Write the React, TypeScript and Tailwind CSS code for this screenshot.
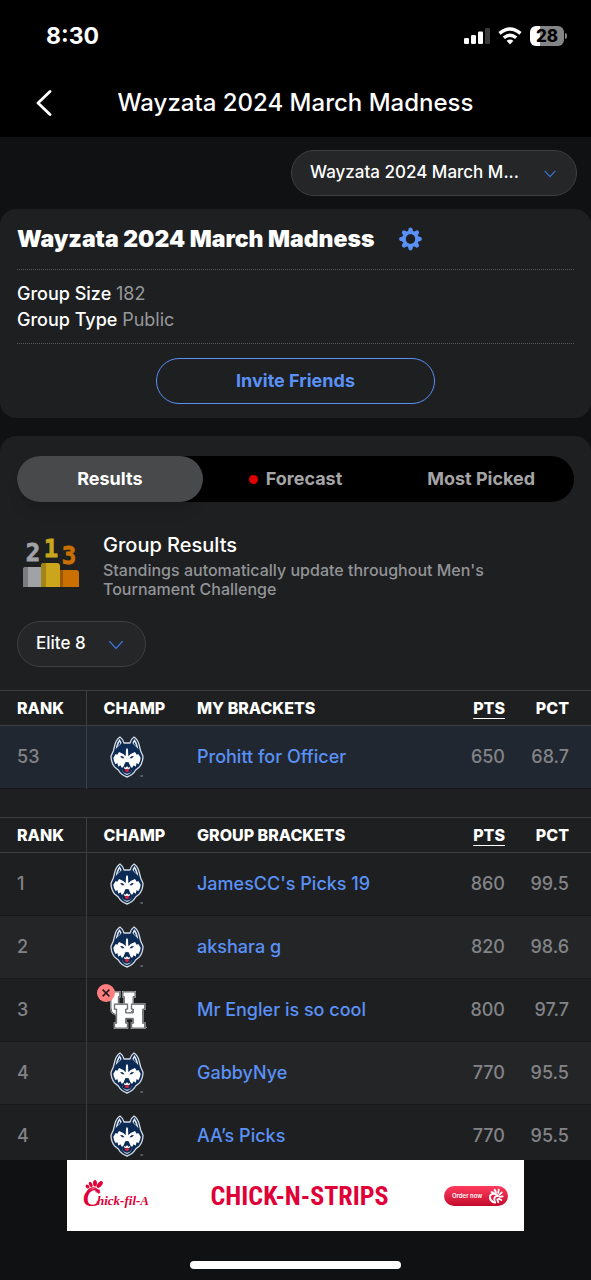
import React from "react";

type Champ = "huskies" | "cougars";
type Bracket = { rank: number; champ: Champ; out?: boolean; name: string; pts: number; pct: string };

const myBrackets: Bracket[] = [{ rank: 53, champ: "huskies", name: "Prohitt for Officer", pts: 650, pct: "68.7" }];

const groupBrackets: Bracket[] = [
  { rank: 1, champ: "huskies", name: "JamesCC's Picks 19", pts: 860, pct: "99.5" },
  { rank: 2, champ: "huskies", name: "akshara g", pts: 820, pct: "98.6" },
  { rank: 3, champ: "cougars", out: true, name: "Mr Engler is so cool", pts: 800, pct: "97.7" },
  { rank: 4, champ: "huskies", name: "GabbyNye", pts: 770, pct: "95.5" },
  { rank: 4, champ: "huskies", name: "AA’s Picks", pts: 770, pct: "95.5" },
];

function HuskyLogo() {
  return (
    <svg viewBox="0 0 102 124" className="h-[42px] w-[34px]" role="img" aria-label="UConn Huskies">
      <path
        d="M30 2 Q38 7 42 20 L60 20 Q64 7 72 2 Q82 8 87 24 L92 44 L99 60 Q99 78 89 91 L77 101 Q69 116 51 122 Q33 116 25 101 L13 91 Q3 78 3 60 L10 44 L15 24 Q20 8 30 2Z"
        fill="#0c2b54"
        stroke="#d3d8de"
        strokeWidth="4"
        strokeLinejoin="round"
      />
      <path d="M29 8 Q20 18 17 39 L22 33 Q31 25 35 20Z" fill="#e6eaef" />
      <path d="M73 8 Q82 18 85 39 L80 33 Q71 25 67 20Z" fill="#e6eaef" />
      <path d="M29 16 L22 31 L31 22Z M73 16 L80 31 L71 22Z" fill="#0c2b54" />
      <path
        d="M10 64 L17 53 L22 55 L27 47 L40 53 L47 60 L48 40 L51 34 L54 40 L55 60 L62 53 L75 47 L80 55 L85 53 L92 64 Q91 76 85 84 L80 80 L77 91 L71 87 L66 95 L61 90 L58 82 L44 82 L41 90 L36 95 L31 87 L25 91 L22 80 L17 84 Q11 76 10 64Z"
        fill="#fff"
      />
      <path d="M30 59 L38 60 L44 66 L36 66Z M72 59 L64 60 L58 66 L66 66Z" fill="#0c2b54" />
      <path d="M44 79 Q51 75 58 79 Q57 86 51 88 Q45 86 44 79Z" fill="#0c2b54" />
      <path d="M41 91 L46 94 L51 90 L56 94 L61 91 L59 97 L51 99 L43 97Z" fill="#fff" />
      <path d="M44 100 Q51 95 58 100 Q57 107 51 108 Q45 107 44 100Z" fill="#d8213f" />
      <path d="M35 99 Q38 111 51 116 Q64 111 67 99 L62 108 Q51 116 40 108Z" fill="#dfe4e9" />
      <path d="M91 119 H99" stroke="#8b929b" strokeWidth="3" />
    </svg>
  );
}

const U_SHAPE =
  "M14 20 H46 V34 H42 V66 Q42 74 51 74 Q60 74 60 66 V34 H56 V20 H92 V34 H86 V66 Q86 90 50 90 Q20 90 20 68 V34 H14Z";
const H_SHAPE =
  "M31 57 H69 V71 H64 V83 H87 V71 H82 V57 H121 V71 H115 V114 H121 V128 H82 V114 H87 V99 H64 V114 H69 V128 H31 V114 H37 V71 H31Z";

function CougarsLogo() {
  return (
    <svg viewBox="8 16 120 116" className="size-10" role="img" aria-label="Houston Cougars">
      {[U_SHAPE, H_SHAPE].map((d) => (
        <g key={d}>
          <path d={d} fill="#fff" stroke="#a9acaf" strokeWidth="6" />
          <path d={d} fill="#fff" stroke="#4c4f52" strokeWidth="2.5" />
        </g>
      ))}
      <path d="M124 126 H128" stroke="#9a9fa3" strokeWidth="3" />
    </svg>
  );
}

function Chevron({ className }: { className: string }) {
  return (
    <svg viewBox="0 0 14 9" className={className} fill="none" stroke="#3f74d8" strokeWidth="1.3" aria-hidden="true">
      <path d="M1 1 L7 7.6 L13 1" />
    </svg>
  );
}

function BracketTable({ title, rows, mine }: { title: string; rows: Bracket[]; mine?: boolean }) {
  return (
    <table className="w-full table-fixed border-collapse text-left">
      <colgroup>
        <col className="w-[86px]" />
        <col className="w-[111px]" />
        <col />
        <col className="w-14" />
        <col className="w-[86px]" />
      </colgroup>
      <thead>
        <tr className="h-[35px] border-y border-[#3d3e40] text-base text-white [&>th]:font-extrabold">
          <th scope="col" className="border-r border-[#3d3e40] pl-[17px]">RANK</th>
          <th scope="col" className="pl-[17px]">CHAMP</th>
          <th scope="col">{title}</th>
          <th scope="col" className="text-right underline underline-offset-4">PTS</th>
          <th scope="col" className="pr-[22px] text-right">PCT</th>
        </tr>
      </thead>
      <tbody>
        {rows.map((row, i) => (
          <tr
            key={row.name}
            className={
              "h-[63px] border-b border-[#19191b] text-lg font-medium text-[#828487] " +
              (mine ? "bg-[#212730]" : i % 2 ? "bg-[#242527]" : "bg-[#1e1f21]")
            }
          >
            <td className="border-r border-r-[#3d3e40] pl-[17px]">{row.rank}</td>
            <td className="pl-5">
              <div className="relative w-10">
                <div className="flex justify-center">{row.champ === "huskies" ? <HuskyLogo /> : <CougarsLogo />}</div>
                {row.out && (
                  <svg viewBox="0 0 18 18" className="absolute -top-1.5 -left-2.5 size-[18px]" role="img" aria-label="Eliminated">
                    <circle cx="9" cy="9" r="9" fill="#ff7f80" />
                    <path d="M5.6 5.6 L12.4 12.4 M12.4 5.6 L5.6 12.4" stroke="#26191a" strokeWidth="1.5" />
                  </svg>
                )}
              </div>
            </td>
            <td>
              <a href="#bracket" className="text-[#5a91f7]">{row.name}</a>
            </td>
            <td className="text-right">{row.pts}</td>
            <td className="pr-[22px] text-right">{row.pct}</td>
          </tr>
        ))}
      </tbody>
    </table>
  );
}

function StatusBar() {
  return (
    <div className="flex items-center justify-between pt-5 pr-6 pl-[46px]">
      <span className="text-[23px] leading-8 font-bold">8:30</span>
      <div className="flex items-center gap-2">
        <svg viewBox="0 0 26 16" className="h-4 w-[26px]" fill="#fff" aria-hidden="true">
          <rect x="0" y="10" width="5" height="6" rx="1.3" />
          <rect x="7" y="7" width="5" height="9" rx="1.3" />
          <rect x="14" y="3.5" width="5" height="12.5" rx="1.3" />
          <rect x="21" y="0" width="5" height="16" rx="1.3" fill="#3a3a3a" />
        </svg>
        <svg viewBox="0 0 24 18" className="h-[18px] w-6" fill="none" stroke="#fff" strokeWidth="3.4" aria-hidden="true">
          <path d="M1.5 6.4 Q12 -2.6 22.5 6.4" />
          <path d="M5.8 10.8 Q12 5.8 18.2 10.8" />
          <path d="M12 17.5 L8.6 13.8 Q12 11.4 15.4 13.8Z" fill="#fff" stroke="none" />
        </svg>
        <div className="flex items-center gap-px">
          <span className="flex h-5 w-[34px] items-center justify-center rounded-md bg-linear-to-r from-white from-28% to-[#858585] to-28% text-[17px] leading-5 font-extrabold text-black">
            28
          </span>
          <span className="h-1.5 w-0.5 rounded-r-full bg-[#858585]" />
        </div>
      </div>
    </div>
  );
}

function GearIcon() {
  return (
    <svg viewBox="0 0 24 24" className="h-6 w-[23px]" aria-hidden="true">
      <g fill="#5a91f7">
        {[0, 45, 90, 135, 180, 225, 270, 315].map((a) => (
          <path key={a} d="M8.6 6 L10.2 1 Q12 -0.8 13.8 1 L15.4 6Z" transform={`rotate(${a} 12 12)`} />
        ))}
      </g>
      <circle cx="12" cy="12" r="6.7" fill="none" stroke="#5a91f7" strokeWidth="3.8" />
      <circle cx="12" cy="12" r="4.9" fill="#1e1f21" />
    </svg>
  );
}

function PodiumIcon() {
  return (
    <svg viewBox="0 -8 56 56" className="size-14 shrink-0" aria-hidden="true">
      <g fontFamily="DejaVu Sans Mono, monospace" fontWeight="700" fontSize="24" textAnchor="middle" strokeWidth="0.8">
        <text x="10" y="21" fill="#a1a2a5" stroke="#a1a2a5">2</text>
        <text x="28" y="17" fill="#cba51c" stroke="#cba51c">1</text>
        <text x="46" y="24" fill="#c97000" stroke="#c97000">3</text>
      </g>
      <path d="M0 30 Q0 27 3 27 H20 V47 H0Z" fill="#a1a2a5" />
      <path d="M0 30 Q0 27 3 27 H5 V47 H0Z" fill="#7b7c7e" />
      <path d="M36 30 H53 Q56 30 56 33 V47 H36Z" fill="#c97000" />
      <path d="M36 30 H40 V47 H36Z" fill="#9c5705" />
      <path d="M18 26 Q18 23 21 23 H34 Q37 23 37 26 V47 H18Z" fill="#cba51c" />
      <path d="M18 26 Q18 23 21 23 H23 V47 H18Z" fill="#a28416" />
    </svg>
  );
}

function AdBanner() {
  return (
    <a href="#order" className="mx-auto flex h-[71px] w-[457px] max-w-full items-center justify-between bg-white px-4 text-[#e00037]">
      <svg viewBox="0 -2 72 36" className="h-9 w-[72px]" role="img" aria-label="Chick-fil-A">
        <g fill="#e00037">
          <ellipse cx="4.5" cy="6.5" rx="1.6" ry="2.2" transform="rotate(-45 4.5 6.5)" />
          <ellipse cx="7.7" cy="4.5" rx="1.6" ry="2.8" transform="rotate(-28 7.7 4.5)" />
          <ellipse cx="12" cy="3.2" rx="1.9" ry="3.2" />
          <ellipse cx="16.7" cy="4.5" rx="2.1" ry="4" transform="rotate(42 16.7 4.5)" />
        </g>
        <path d="M4 12 Q7 7 12 8 Q15 9 12.5 11.5 M14 10 L16 12 L13.5 12" fill="none" stroke="#e00037" strokeWidth="1.3" />
        <g fill="#e00037" fontFamily="Liberation Serif, serif" fontStyle="italic" fontWeight="700">
          <text x="0" y="26" fontSize="25">C</text>
          <text x="14" y="25" fontSize="13">hick-fil-A</text>
        </g>
      </svg>
      <span className="font-['Liberation_Sans_Narrow','Roboto_Condensed','Liberation_Sans',sans-serif] text-[26px] leading-8 font-bold">
        CHICK-N-STRIPS
      </span>
      <span className="flex h-5 w-16 items-center justify-between rounded-full bg-linear-to-b from-[#ff3a5e] to-[#c4062c] pr-1 pl-2 text-[6px] leading-5 font-semibold whitespace-nowrap text-white">
        Order now
        <svg viewBox="0 0 18 18" className="size-4" fill="none" stroke="#fff" strokeWidth="2.1" strokeLinecap="round" aria-hidden="true">
          <path d="M6 16 Q1 13 2.5 8.5 Q4.5 5.5 9 7 L11.5 9 L8.5 9.5 Q6 11 8 16.5" />
          <path d="M4 4.5 L6.5 5.5 M7.5 2 L9 5 M12 2 L11.5 5.5 M15.5 5 L13 7.5 M16.5 9.5 L13.5 10 M15 13.5 L12 12 M11.5 16 L10.5 13" />
        </svg>
      </span>
    </a>
  );
}

export default function App() {
  return (
    <div className="flex h-screen flex-col overflow-hidden bg-[#101113] font-['Inter','Liberation_Sans',sans-serif] text-white">
      <header className="h-[137px] shrink-0 bg-black">
        <StatusBar />
        <div className="grid grid-cols-[1fr_auto_1fr] items-center px-9 pt-[33px]">
          <button type="button" aria-label="Back" className="flex h-9 w-5 items-center">
            <svg viewBox="0 0 16 26" className="h-[26px] w-4" fill="none" stroke="#fff" strokeWidth="2.8" strokeLinecap="round" strokeLinejoin="round" aria-hidden="true">
              <path d="M14 1.5 L2 13 L14 24.5" />
            </svg>
          </button>
          <h1 className="text-2xl leading-9 font-medium">Wayzata 2024 March Madness</h1>
        </div>
      </header>

      <main className="min-h-0 flex-1 overflow-y-auto [scrollbar-width:none]">
        <div className="flex justify-end px-3.5 py-[13px]">
          <div className="relative w-[286px]">
            <select aria-label="Group" className="h-[46px] w-full appearance-none rounded-full border border-[#3d3f41] bg-[#242628] pl-[18px] text-[17px] font-medium text-white">
              <option>Wayzata 2024 March M...</option>
            </select>
            <Chevron className="pointer-events-none absolute top-5 right-5 h-2 w-3.5" />
          </div>
        </div>

        <section className="rounded-2xl bg-[#1e1f21] px-[17px] pb-3.5">
          <div className="flex h-[61px] items-center gap-6 border-b border-dotted border-[#55575a]">
            <h2 className="text-[23px] font-black">Wayzata 2024 March Madness</h2>
            <button type="button" aria-label="Group settings">
              <GearIcon />
            </button>
          </div>
          <div className="border-b border-dotted border-[#55575a] pt-[11px] pb-2.5 text-lg leading-[26px] font-medium">
            <p>Group Size <span className="font-normal text-[#96989b]">182</span></p>
            <p>Group Type <span className="font-normal text-[#96989b]">Public</span></p>
          </div>
          <button type="button" className="mx-auto mt-3.5 block h-[46px] w-1/2 rounded-full border border-[#5a91f7] text-lg font-bold text-[#5a91f7]">
            Invite Friends
          </button>
        </section>

        <section className="mt-[18px] rounded-t-2xl bg-[#1e1f21] pt-5">
          <div className="mx-[17px] grid h-[46px] grid-cols-3 rounded-full bg-black text-lg font-bold text-[#a5a5a7]">
            <button type="button" className="rounded-full bg-[#48494b] text-white shadow-lg">Results</button>
            <button type="button" className="flex items-center justify-center gap-2">
              <span className="size-[9px] rounded-full bg-[#e00000]" />
              Forecast
            </button>
            <button type="button">Most Picked</button>
          </div>

          <div className="flex gap-6 px-[23px] pt-[30px]">
            <PodiumIcon />
            <div>
              <h3 className="text-xl leading-[26px] font-medium">Group Results</h3>
              <p className="mt-[3px] text-base leading-[19px] font-medium text-[#929497]">
                Standings automatically update throughout Men's Tournament Challenge
              </p>
            </div>
          </div>

          <div className="relative mt-[22px] ml-[17px] w-[129px]">
            <select aria-label="Round" className="h-[46px] w-full appearance-none rounded-full border border-[#3d3f41] bg-[#242628] pl-[18px] text-[17px] font-medium text-white">
              <option>Elite 8</option>
            </select>
            <Chevron className="pointer-events-none absolute top-[19px] right-[22px] h-2.5 w-4" />
          </div>

          <div className="mt-[23px] flex flex-col gap-7">
            <BracketTable title="MY BRACKETS" rows={myBrackets} mine />
            <BracketTable title="GROUP BRACKETS" rows={groupBrackets} />
          </div>
        </section>
      </main>

      <footer className="h-[120px] shrink-0">
        <AdBanner />
        <div className="mx-auto mt-[30px] h-2 w-[211px] rounded-full bg-white" />
      </footer>
    </div>
  );
}
